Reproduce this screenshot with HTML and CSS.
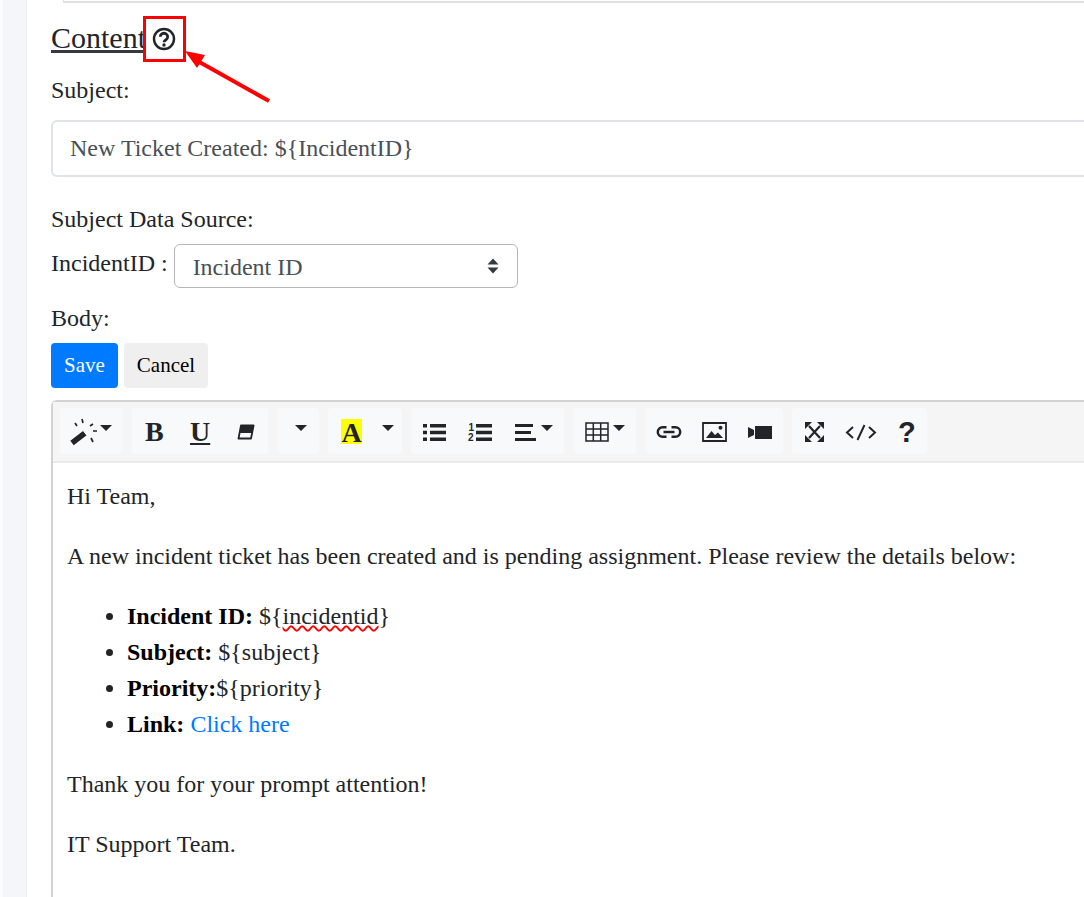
FILE: index.html
```html
<!DOCTYPE html>
<html lang="en">
<head>
<meta charset="utf-8">
<title>Content</title>
<link rel="stylesheet" href="styles.css">
</head>
<body>
<div class="page">
  <div class="rail"></div>
  <main class="main">
    <div class="topline"></div>
    <h2 class="title"><span class="title-text">Content</span>
      <svg class="help" viewBox="0 0 24 24" width="24" height="24"><circle cx="12" cy="12" r="10" fill="none" stroke="#212529" stroke-width="2.4"/><path d="M8.300 9.800a3.700 3.500 0 1 1 5.700 2.900c-1.300.8-2 1.300-2 2.500" fill="none" stroke="#212529" stroke-width="2.800"/><circle cx="12" cy="18" r="1.700" fill="#212529"/></svg>
    </h2>
    <label class="label subject-label">Subject:</label>
    <div class="input">New Ticket Created: ${IncidentID}</div>
    <label class="label source-label">Subject Data Source:</label>
    <div class="source-row">
      <span class="label">IncidentID :</span>
      <div class="select">Incident ID
        <svg class="updown" viewBox="0 0 12 16" width="12" height="16"><path d="M6 0.500 11.500 6.500H.5zM6 15.500 .5 9.500H11.500z" fill="#343a40"/></svg>
      </div>
    </div>
    <label class="label body-label">Body:</label>
    <div class="actions">
      <button class="btn btn-save">Save</button>
      <button class="btn btn-cancel">Cancel</button>
    </div>
    <div class="editor">
      <div class="toolbar">
        <div class="group g-magic">
          <svg viewBox="0 0 27 27" width="27" height="27" class="ic wand"><path d="M2 25 15 15" stroke="#212529" stroke-width="5.500" fill="none"/><path d="M13.500 13 17 17.500" stroke="#f8f9fa" stroke-width="1"/><path d="M12 1l1 4M5 5l2 3M20 8l3-2M23 13h4M21 20l2 4" stroke="#212529" stroke-width="1.700" fill="none"/></svg>
          <i class="caret caret-magic"></i>
        </div>
        <div class="group g-font">
          <span class="tb-b">B</span>
          <span class="tb-u">U</span>
          <svg viewBox="0 0 18 16" width="18" height="16" class="ic"><path d="M4 1.500h12.600L14 14.500H1.500z" fill="none" stroke="#212529" stroke-width="1.800" stroke-linejoin="round"/><path d="M4 1.500h12.600L15 9H2.500z" fill="#212529"/></svg>
        </div>
        <div class="group g-caret"><i class="caret"></i></div>
        <div class="group g-color">
          <span class="tb-a">A</span>
          <i class="caret caret-a"></i>
        </div>
        <div class="group g-para">
          <svg viewBox="0 0 23 19" width="23" height="19" class="ic"><path d="M0 1h4v3.500H0zM0 7.800h4v3.500H0zM0 14.500h4V18H0z" fill="#212529"/><path d="M7 1h16v3.500H7zM7 7.800h16v3.500H7zM7 14.500h16V18H7z" fill="#212529"/></svg>
          <svg viewBox="0 0 24 19" width="24" height="19" class="ic ol"><path d="M8 1h16v3.500H8zM8 7.800h16v3.500H8zM8 14.500h16V18H8z" fill="#212529"/><text x="0.500" y="8" class="ol-n">1</text><text x="0" y="18" class="ol-n">2</text></svg>
          <svg viewBox="0 0 21 19" width="21" height="19" class="ic al"><path d="M0 1h18v3H0zM0 8h16v3H0zM0 15h21v3H0z" fill="#212529"/></svg>
          <i class="caret caret-al"></i>
        </div>
        <div class="group g-table">
          <svg viewBox="0 0 24 20" width="24" height="20" class="ic"><path d="M1 1h22v18H1zM1 7h22M1 13h22M8.300 1v18M15.700 1v18" fill="none" stroke="#212529" stroke-width="1.500"/></svg>
          <i class="caret caret-t"></i>
        </div>
        <div class="group g-insert">
          <svg viewBox="0 0 26 12" width="26" height="12" class="ic"><path d="M10.500 1.300H6.500a4.700 4.700 0 0 0 0 9.400h4M15.500 1.300h4a4.700 4.700 0 0 1 0 9.400h-4M7.500 6h11" fill="none" stroke="#212529" stroke-width="2.500"/></svg>
          <svg viewBox="0 0 25 20" width="25" height="20" class="ic pic"><path d="M1 1h23v18H1z" fill="none" stroke="#212529" stroke-width="1.800"/><path d="M4 16l5.500-7 3.500 4 3-2.500 5 5.500z" fill="#212529"/><circle cx="18.500" cy="5.800" r="2" fill="#212529"/></svg>
          <svg viewBox="0 0 24 15" width="24" height="15" class="ic vid"><path d="M7 1h17v13H7z" fill="#212529"/><path d="M0 2l6 3v5l-6 3z" fill="#212529"/></svg>
        </div>
        <div class="group g-view">
          <svg viewBox="0 0 19 20" width="19" height="20" class="ic"><path d="M4 4l11 12M15 4 4 16" stroke="#212529" stroke-width="2.200" fill="none"/><path d="M0 0h7L0 7zM19 0h-7l7 7zM0 20h7l-7-7zM19 20h-7l7-7z" fill="#212529"/></svg>
          <svg viewBox="0 0 32 17" width="32" height="17" class="ic code"><path d="M8 3 2 8.500 8 14M24 3l6 5.500L24 14M19.500 1l-7 15" stroke="#212529" stroke-width="2" fill="none"/></svg>
          <span class="tb-q">?</span>
        </div>
      </div>
      <div class="content">
        <p>Hi Team,</p>
        <p>A new incident ticket has been created and is pending assignment. Please review the details below:</p>
        <ul>
          <li><b>Incident ID:</b> ${<span class="squiggle">incidentid</span>}</li>
          <li><b>Subject:</b> ${subject}</li>
          <li><b>Priority:</b>${priority}</li>
          <li><b>Link:</b> <a href="#">Click here</a></li>
        </ul>
        <p>Thank you for your prompt attention!</p>
        <p>IT Support Team.</p>
      </div>
    </div>
    <div class="callout"></div>
    <svg class="arrow" viewBox="0 0 100 70" width="100" height="70"><path d="M9 5 84 47" stroke="#f00" stroke-width="4" fill="none"/><path d="M0-3 20 1 12 14z" fill="#f00"/></svg>
  </main>
</div>
</body>
</html>
```
FILE: styles.css
```css
* { box-sizing: border-box; }
html, body { margin: 0; height: 100%; overflow: hidden; background: #fff; }
body { font-family: "Liberation Serif", "Times New Roman", serif; font-size: 24px; color: #212529; }
.page { display: flex; height: 897px; }
.rail { width: 27px; flex: none; background: #f4f6f9; border-left: 3px solid #fafbfc; border-right: 1px solid #f0f1f3; }
.main { position: relative; flex: 1; min-width: 0; padding-left: 24px; overflow: hidden; }
.topline { height: 3px; margin-left: 12px; width: 1100px; border-left: 1px solid #e0e0e0; border-bottom: 2px solid #e0e0e0; }
.title { margin: 16px 0 0; height: 34px; display: flex; gap: 6px; font-weight: 400; font-size: 30px; width: max-content; }
.title-text { border-bottom: 3px solid #343a40; line-height: 37px; height: 34px; }
.help { display: block; margin-top: 8px; }
.label { display: block; line-height: 28px; }
.subject-label { margin-top: 23px; }
.input { margin-top: 16px; height: 57px; width: 1100px; border: 2px solid #e0e3e7; border-radius: 6px; padding: 0 17px; line-height: 53px; color: #495057; }
.source-label { margin-top: 28px; }
.source-row { display: flex; align-items: flex-start; gap: 6px; margin-top: 11px; }
.source-row .label { line-height: 38px; }
.select { position: relative; width: 344px; height: 44px; border: 1.5px solid #b5b5b5; border-radius: 6px; padding: 0 18px; line-height: 44px; color: #495057; }
.updown { position: absolute; right: 18px; top: 13px; }
.body-label { margin-top: 16px; }
.actions { display: flex; gap: 6px; margin-top: 11px; }
.btn { height: 45px; border: 0; border-radius: 4px; font: inherit; font-size: 21px; padding: 0; }
.btn-save { width: 67px; background: #007bff; color: #fff; }
.btn-cancel { width: 84px; background: #efefef; color: #000; }
.editor { margin-top: 12px; width: 1100px; min-height: 600px; border: 2px solid #d2d2d2; border-right: 0; border-bottom: 0; border-radius: 6px 0 0 0; }
.toolbar { display: flex; height: 61px; background: #f5f5f5; border-bottom: 2px solid #e9e9e9; padding: 6px 0 0 7px; gap: 9px; align-items: flex-start; }
.group { display: flex; align-items: center; height: 46px; padding-top: 2px; background: #f8f9fa; border-radius: 4px; flex: none; }
.ic { display: block; flex: none; overflow: visible; }
.caret { display: block; width: 0; height: 0; border: 6px solid transparent; border-top: 6px solid #212529; border-bottom: 0; flex: none; margin-top: -8px; }
.g-magic { width: 63px; padding-left: 10px; }
.caret-magic { margin-left: 3px; }
.wand { margin-top: -2px; }
.g-font { width: 136px; padding-left: 13px; }
.tb-b { font: 700 28px/28px "Liberation Serif", serif; color: #212529; width: 45px; }
.tb-u { font: 700 28px/28px "Liberation Serif", serif; text-decoration: underline; color: #212529; width: 47px; }
.g-caret { width: 42px; padding-left: 18px; }
.g-color { width: 74px; padding-left: 13px; }
.tb-a { background: #ff0; font: 700 28px/27px "Liberation Serif", serif; width: 21px; height: 25px; text-align: center; color: #212529; margin-top: -2px; }
.caret-a { margin-left: 20px; }
.g-para { width: 153px; padding-left: 12px; }
.ol { margin-left: 22px; }
.ol-n { font: 700 10px "Liberation Sans", sans-serif; fill: #212529; }
.al { margin-left: 23px; }
.caret-al { margin-left: 5px; }
.g-table { width: 63px; padding-left: 12px; }
.caret-t { margin-left: 4px; }
.g-insert { width: 138px; padding-left: 11px; }
.pic { margin-left: 20px; }
.vid { margin-left: 21px; }
.g-view { width: 135px; padding-left: 13px; }
.code { margin-left: 21px; }
.tb-q { font: 700 29px/30px "Liberation Sans", sans-serif; color: #212529; margin-left: 21px; }
.content { padding: 15px 14px 0; line-height: 36px; }
.content p { margin: 0 0 24px; }
.content ul { margin: 0 0 24px; padding-left: 60px; }
.content li b { color: #000; }
.content a { color: #007bff; text-decoration: none; }
.squiggle { text-decoration: underline wavy #f00 1.5px; text-underline-offset: 1px; }
.callout { position: absolute; left: 116px; top: 16px; width: 43px; height: 46px; border: 3px solid #f00; }
.arrow { position: absolute; left: 158px; top: 54px; overflow: visible; }
```
